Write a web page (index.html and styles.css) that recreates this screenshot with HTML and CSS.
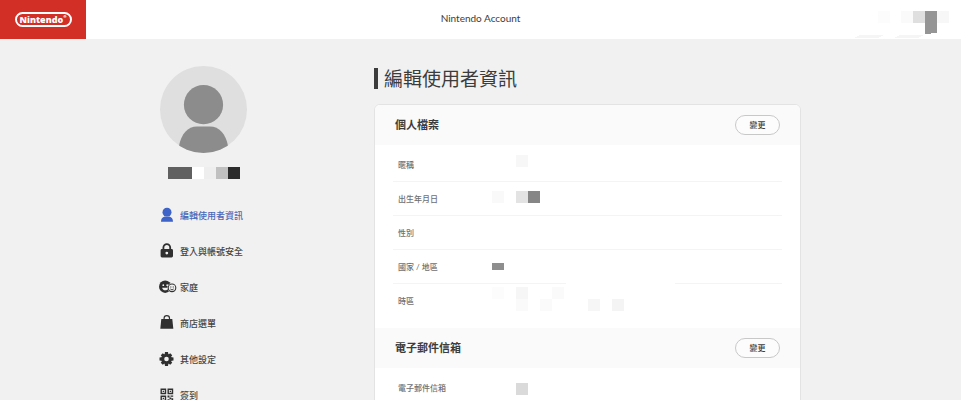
FILE: index.html
```html
<!DOCTYPE html>
<html lang="zh-Hant">
<head>
<meta charset="utf-8">
<meta name="viewport" content="width=device-width, initial-scale=1">
<title>Nintendo Account</title>
<link rel="stylesheet" href="styles.css">
</head>
<body>
<header class="topbar">
  <a class="brand" href="#"><span class="brand-pill">Nintendo<span class="brand-reg">®</span></span></a>
  <p class="topbar-title">Nintendo Account</p>
  <svg class="account" width="108" height="39" viewBox="0 0 108 39" shape-rendering="crispEdges" aria-hidden="true">
    <path fill="#fcfcfc" d="M25 11h12v12H25z"/>
    <path fill="#fafafa" d="M48 11h12v12H48z"/>
    <path fill="#dfdfdf" d="M60 11h12v12H60z"/>
    <path fill="#959595" d="M72 11h12v22l-12 1z"/>
    <path fill="#f7f7f7" d="M84 11h12v12H84z"/>
    <path fill="#f5f5f5" d="M1 38l6-3h24l-6 3zM41 38l6-3h24l-6 3z"/>
  </svg>
</header>

<div class="page">
  <aside class="sidebar">
    <svg class="avatar" viewBox="0 0 87 87" aria-hidden="true">
      <clipPath id="disc"><circle cx="43.5" cy="43.5" r="43.5"/></clipPath>
      <circle cx="43.5" cy="43.5" r="43.5" fill="#dfdfdf"/>
      <g clip-path="url(#disc)" fill="#8c8c8c">
        <circle cx="43.5" cy="38.7" r="19.6"/>
        <path d="M19 87V80c2-12 9-19.500 18-19.500h13c9 0 16 7.500 18 19.500v7z"/>
      </g>
    </svg>
    <svg class="nickname" width="72" height="12" viewBox="0 0 72 12" shape-rendering="crispEdges" aria-hidden="true">
      <path fill="#606060" d="M0 0h24v12H0z"/>
      <path fill="#fff" d="M24 0h12v12H24z"/>
      <path fill="#eee" d="M36 0h12v12H36z"/>
      <path fill="#c0c0c0" d="M48 0h12v12H48z"/>
      <path fill="#2c2c2c" d="M60 0h12v12H60z"/>
    </svg>
    <nav class="menu">
      <a class="menu-item is-active" href="#">
        <svg class="icon" viewBox="0 0 18 16" aria-hidden="true"><circle cx="7" cy="5.300" r="4.500"/><path d="M1 14.700c0-3 1.300-4.700 3.700-5.300 1.500.9 3.100.9 4.600 0 2.400.6 3.700 2.300 3.700 5.300z"/></svg>
        編輯使用者資訊</a>
      <a class="menu-item" href="#">
        <svg class="icon" viewBox="0 0 18 16" aria-hidden="true"><path fill="none" stroke="currentColor" stroke-width="1.800" d="M3.400 7V4.500a3.400 3.400 0 0 1 6.800 0V7"/><path fill-rule="evenodd" d="M2 6h9.600a1.400 1.400 0 0 1 1.400 1.400v5.700a1.400 1.400 0 0 1-1.400 1.400H2A1.400 1.400 0 0 1 .6 13.100V7.400A1.400 1.400 0 0 1 2 6zm4.800 2.700a1.400 1.400 0 1 0 .01 2.800 1.400 1.400 0 0 0-.01-2.800z"/></svg>
        登入與帳號安全</a>
      <a class="menu-item" href="#">
        <svg class="icon" viewBox="0 0 18 16" aria-hidden="true"><circle cx="5.200" cy="7.700" r="6.200"/><g class="face"><circle cx="3.300" cy="6.200" r=".9"/><circle cx="7.200" cy="6.200" r=".9"/><path d="M2.200 8.700c.6 3.500 5.400 3.500 6 0z"/></g><circle class="face" cx="12" cy="8.800" r="4.700"/><circle cx="12" cy="8.800" r="3.800" fill="none" stroke="currentColor" stroke-width="1.100"/><path fill="none" stroke="currentColor" stroke-width=".9" d="M10.200 8h1.200M12.700 8h1.200M10.300 9.900c.8 1.100 2.600 1.100 3.400 0"/></svg>
        家庭</a>
      <a class="menu-item" href="#">
        <svg class="icon" viewBox="0 0 18 16" aria-hidden="true"><path d="M1.300 4h11L13.300 13.800H.3z"/><path fill="none" stroke="currentColor" stroke-width="1.200" d="M4.100 5.500V3.300a2.700 2.700 0 0 1 5.400 0v2.200"/></svg>
        商店選單</a>
      <a class="menu-item" href="#">
        <svg class="icon" viewBox="0 0 18 16" aria-hidden="true"><g transform="translate(6.500 8)"><circle r="3.700" fill="none" stroke="currentColor" stroke-width="2.800"/><path d="M-1.500-7h3l.5 3h-4zM-1.500 7h3l.5-3h-4zM-7-1.500v3l3 .5v-4zM7-1.500v3l-3 .5v-4z"/><path transform="rotate(45)" d="M-1.400-6.700h2.800l.5 3h-3.800zM-1.400 6.700h2.800l.5-3h-3.800zM-6.700-1.400v2.800l3 .5v-3.800zM6.700-1.400v2.800l-3 .5v-3.800z"/></g></svg>
        其他設定</a>
      <a class="menu-item" href="#">
        <svg class="icon" viewBox="0 0 18 16" aria-hidden="true"><path fill="none" stroke="currentColor" stroke-width="1.400" d="M1.200 2.200h4.300v4.300H1.200zM8.200 2.200h4.300v4.300H8.200zM1.200 9.200h4.300v4.300H1.200z"/><path d="M2.700 3.700h1.400v1.400H2.700zM9.700 3.700h1.400v1.400H9.700zM2.700 10.700h1.400v1.400H2.700zM7.500 8.500h2v2h-2zM10.500 8.500h2.700v1.300h-2.700zM9.500 10.500h1.800v1.700H9.500zM7.500 12.200h2v2h-2zM11.500 11.200h1.700v3h-1.700z"/></svg>
        簽到</a>
    </nav>
  </aside>

  <main class="content">
    <h1 class="page-title">編輯使用者資訊</h1>
    <div class="card">
      <section>
        <div class="section-head">
          <h2>個人檔案</h2>
          <button class="change" type="button">變更</button>
        </div>
        <dl class="rows">
          <div class="row"><dt>暱稱</dt><dd><svg class="value" viewBox="0 0 144 33" aria-hidden="true"><path fill="#f7f7f7" d="M24 7h12v12H24z"/></svg></dd></div>
          <div class="row"><dt>出生年月日</dt><dd><svg class="value" viewBox="0 0 144 33" aria-hidden="true"><path fill="#f9f9f9" d="M0 9h12v12H0z"/><path fill="#e3e3e3" d="M24 9h12v12H24z"/><path fill="#868686" d="M36 9h12v12H36z"/></svg></dd></div>
          <div class="row"><dt>性別</dt><dd></dd></div>
          <div class="row row-broken"><dt>國家 / 地區</dt><dd><svg class="value" viewBox="0 0 144 33" aria-hidden="true"><path fill="#8e8e8e" d="M0 13h12v7H0z"/></svg></dd></div>
          <div class="row"><dt>時區</dt><dd><svg class="value" viewBox="0 0 144 33" aria-hidden="true"><path fill="#fcfcfc" d="M0 3h12v12H0z"/><path fill="#f6f6f6" d="M24 3h12v12H24z"/><path fill="#fafafa" d="M60 3h12v12H60zM24 15h12v12H24zM48 15h12v12H48z"/><path fill="#f6f6f6" d="M96 15h12v12H96z"/><path fill="#f4f4f4" d="M120 15h12v12h-12z"/></svg></dd></div>
        </dl>
      </section>
      <section>
        <div class="section-head">
          <h2>電子郵件信箱</h2>
          <button class="change" type="button">變更</button>
        </div>
        <dl class="rows">
          <div class="row"><dt>電子郵件信箱</dt><dd><svg class="value" viewBox="0 0 144 33" aria-hidden="true"><path fill="#dadada" d="M24 12h12v12H24z"/></svg></dd></div>
        </dl>
      </section>
    </div>
  </main>
</div>
</body>
</html>
```

FILE: styles.css
```css
* {
  box-sizing: border-box;
}

body {
  margin: 0;
  height: 100vh;
  overflow: hidden;
  background: #f1f1f1;
  color: #3c3c3c;
  font-family: Lato, "Noto Sans CJK TC", sans-serif;
}

h1, h2, p, dl, dd {
  margin: 0;
}

svg {
  display: block;
}

.topbar {
  display: grid;
  grid-template-columns: 1fr auto 1fr;
  height: 39px;
  background: #fff;
}

.brand {
  display: flex;
  justify-content: center;
  align-items: center;
  justify-self: start;
  width: 86px;
  background: #d22f27;
  color: #fff;
  text-decoration: none;
}

.brand-pill {
  display: flex;
  justify-content: center;
  width: 57px;
  height: 15px;
  border: 2px solid #fff;
  border-radius: 8px;
  font: 800 9px/11px "Open Sans", sans-serif;
}

.brand-reg {
  font-size: 4px;
  line-height: 6px;
}

.topbar-title {
  font-size: 10px;
  line-height: 37px;
}

.account {
  justify-self: end;
}

.page {
  display: grid;
  grid-template-columns: 87px minmax(0, 1fr);
  column-gap: 127px;
  max-width: 641px;
  margin: 0 auto;
  padding-top: 27px;
}

.avatar {
  width: 87px;
  height: 87px;
}

.nickname {
  margin: 14px auto 18px;
}

.menu-item {
  display: flex;
  align-items: center;
  gap: 2px;
  height: 36px;
  color: #444;
  font-size: 9px;
  font-weight: 500;
  white-space: nowrap;
  text-decoration: none;
}

.menu-item.is-active {
  color: #4a68b8;
}

.icon {
  flex: none;
  width: 18px;
  height: 16px;
  overflow: visible;
  fill: #303030;
  color: #303030;
}

.is-active .icon {
  fill: #3d62c8;
}

.icon .face {
  fill: #f1f1f1;
}

.content {
  padding-top: 2px;
}

.page-title {
  border-left: 4px solid #3c3c3c;
  padding-left: 6px;
  font-size: 19px;
  font-weight: 400;
  line-height: 21px;
}

.card {
  margin-top: 15px;
  overflow: hidden;
  border: 1px solid #e3e3e3;
  border-radius: 6px;
  background: #fff;
}

.section-head {
  display: flex;
  justify-content: space-between;
  align-items: center;
  height: 40px;
  padding: 0 20px;
  background: #fafafa;
}

.section-head h2 {
  padding-bottom: 2px;
  font-size: 11px;
  font-weight: 700;
}

.change {
  width: 45px;
  height: 20px;
  padding: 0;
  border: 1px solid #c8c8c8;
  border-radius: 10px;
  background: #fcfcfc;
  color: #3c3c3c;
  font: inherit;
  font-size: 8px;
  font-weight: 500;
  line-height: 16px;
}

.rows {
  padding: 3px 18px 10px;
}

.row {
  display: grid;
  grid-template-columns: 94px 1fr;
  height: 34px;
  padding-left: 5px;
  border-bottom: 1px solid #f4f4f4;
}

.row:last-child {
  border-bottom-color: transparent;
}

.row-broken {
  border-image: linear-gradient(to right, #f4f4f4 173px, transparent 173px 282px, #f4f4f4 282px) 1;
}

.row dt {
  color: #707070;
  font-size: 8px;
  font-weight: 500;
  line-height: 34px;
}

.value {
  width: 144px;
  height: 33px;
  shape-rendering: crispEdges;
}
```
